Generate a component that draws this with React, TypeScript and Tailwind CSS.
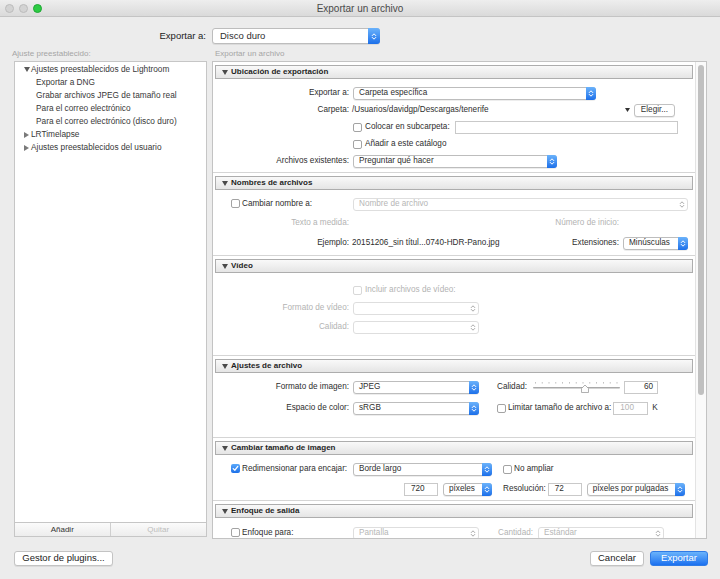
import React from "react";

const Chevrons = ({ color }: { color: string }) => (
  <svg width="6" height="9" viewBox="0 0 6 9" fill="none">
    <path d="M1.2 3.6 L3 1.8 L4.8 3.6" stroke={color} strokeWidth="1" strokeLinecap="round" strokeLinejoin="round" />
    <path d="M1.2 5.4 L3 7.2 L4.8 5.4" stroke={color} strokeWidth="1" strokeLinecap="round" strokeLinejoin="round" />
  </svg>
);

function Popup({ w, text = "", disabled = false, big = false }: { w: string; text?: string; disabled?: boolean; big?: boolean }) {
  return (
    <div
      className={`${w} ${big ? "h-[16px]" : "h-[13px]"} shrink-0 flex items-stretch bg-white rounded-[3px] border ${
        disabled ? "border-[#dedede]" : "border-[#bdbdbd] shadow-[0_1px_0_rgba(0,0,0,0.07)]"
      }`}
    >
      <span
        className={`flex-1 min-w-0 flex items-center whitespace-nowrap overflow-hidden ${
          big ? "pl-[7px] text-[9.5px]" : "pl-[5px] text-[8.2px]"
        } ${disabled ? "text-[#b6b6b6]" : "text-[#2e2e2e]"}`}
      >
        {text}
      </span>
      {disabled ? (
        <span className="w-[10px] flex items-center justify-center">
          <Chevrons color="#a9a9a9" />
        </span>
      ) : (
        <span
          className={`${big ? "w-[12px]" : "w-[10px]"} -my-px -mr-px rounded-r-[3px] bg-linear-to-b from-[#6ab2fb] to-[#1b6fe9] flex items-center justify-center`}
        >
          <Chevrons color="#ffffff" />
        </span>
      )}
    </div>
  );
}

function Check({ checked = false, disabled = false }: { checked?: boolean; disabled?: boolean }) {
  if (checked) {
    return (
      <span className="w-[9px] h-[9px] shrink-0 rounded-[2px] bg-linear-to-b from-[#5aa8fa] to-[#1c6fe8] flex items-center justify-center">
        <svg width="7" height="7" viewBox="0 0 7 7">
          <path d="M1.2 3.6 L2.9 5.2 L5.8 1.4" stroke="#fff" strokeWidth="1.3" fill="none" strokeLinecap="round" strokeLinejoin="round" />
        </svg>
      </span>
    );
  }
  return (
    <span
      className={`w-[9px] h-[9px] shrink-0 rounded-[2px] bg-white border ${disabled ? "border-[#d8d8d8]" : "border-[#a3a3a3]"}`}
    />
  );
}

function Field({ w, value = "", muted = false, right = false }: { w: string; value?: string; muted?: boolean; right?: boolean }) {
  return (
    <div
      className={`${w} h-[13px] shrink-0 bg-white border border-[#c9c9c9] flex items-center text-[8.2px] ${
        right ? "justify-end pr-[4px]" : "pl-[6px]"
      } ${muted ? "text-[#b3b3b3]" : "text-[#2e2e2e]"}`}
    >
      {value}
    </div>
  );
}

function Header({ title }: { title: string }) {
  return (
    <div className="mx-[2px] h-[14px] shrink-0 border border-[#adadad] bg-linear-to-b from-[#f9f9f9] to-[#e5e5e5] flex items-center pl-[6px] gap-[3px]">
      <svg width="6" height="5" viewBox="0 0 6 5">
        <path d="M0 0 H6 L3 5 Z" fill="#4a4a4a" />
      </svg>
      <span className="text-[8px] font-bold text-[#1f1f1f]">{title}</span>
    </div>
  );
}

const Sep = () => <div className="mt-auto mb-[3px] h-px bg-[#d5d5d5]" />;

const Label = ({ children, muted = false }: { children: React.ReactNode; muted?: boolean }) => (
  <span className={`w-[136px] shrink-0 text-right ${muted ? "text-[#b3b3b3]" : ""}`}>{children}</span>
);

const TREE = [
  { t: "Ajustes preestablecidos de Lightroom", kind: "open" },
  { t: "Exportar a DNG", kind: "child" },
  { t: "Grabar archivos JPEG de tamaño real", kind: "child" },
  { t: "Para el correo electrónico", kind: "child" },
  { t: "Para el correo electrónico (disco duro)", kind: "child" },
  { t: "LRTimelapse", kind: "closed" },
  { t: "Ajustes preestablecidos del usuario", kind: "closed" },
];

export default function App() {
  return (
    <div className="w-[720px] h-[579px] bg-[#ececec] flex flex-col overflow-hidden font-['Liberation_Sans',Arial,sans-serif] text-[#2e2e2e]">
      {/* title bar */}
      <div className="h-[17px] shrink-0 grid grid-cols-[1fr_auto_1fr] items-center border-b border-[#c4c4c4] bg-linear-to-b from-[#eeeeee] to-[#dadada]">
        <div className="flex items-center gap-[5px] pl-[5px]">
          <span className="w-[9px] h-[9px] rounded-full bg-[#d3d3d3] border border-[#bcbcbc]" />
          <span className="w-[9px] h-[9px] rounded-full bg-[#d3d3d3] border border-[#bcbcbc]" />
          <span className="w-[9px] h-[9px] rounded-full bg-[#2ccb43] border border-[#1fa734]" />
        </div>
        <span className="text-[10px] text-[#4a4a4a]">Exportar un archivo</span>
        <div />
      </div>

      {/* destination */}
      <div className="mt-[11px] h-[16px] flex items-center shrink-0">
        <span className="w-[206px] text-right text-[9.5px] text-[#222]">Exportar a:</span>
        <div className="ml-[6px]">
          <Popup w="w-[168px]" text="Disco duro" big />
        </div>
      </div>

      <div className="mt-[4px] h-[12px] flex items-center text-[8px] text-[#a5a5a5] shrink-0">
        <span className="w-[215px] pl-[12px]">Ajuste preestablecido:</span>
        <span>Exportar un archivo</span>
      </div>

      {/* main */}
      <div className="mt-[1px] flex items-start pl-[14px] shrink-0">
        {/* presets */}
        <div className="w-[193px] h-[476px] bg-white border border-[#c6c6c6] flex flex-col text-[8.3px] text-[#383838]">
          <div className="flex-1 pt-[1px]">
            {TREE.map((r) => (
              <div key={r.t} className={`h-[13px] flex items-center ${r.kind === "child" ? "pl-[21px]" : "pl-[9px]"}`}>
                {r.kind === "open" && (
                  <svg width="6" height="5" viewBox="0 0 6 5" className="mr-px">
                    <path d="M0 0 H6 L3 5 Z" fill="#5a5a5a" />
                  </svg>
                )}
                {r.kind === "closed" && (
                  <svg width="5" height="6" viewBox="0 0 5 6" className="mr-[2px]">
                    <path d="M0 0 V6 L5 3 Z" fill="#7a7a7a" />
                  </svg>
                )}
                <span>{r.t}</span>
              </div>
            ))}
          </div>
          <div className="h-[14px] grid grid-cols-2 border-t border-[#c6c6c6] bg-linear-to-b from-[#fbfbfb] to-[#ededed] text-[8px]">
            <span className="flex items-center justify-center border-r border-[#cfcfcf] text-[#333]">Añadir</span>
            <span className="flex items-center justify-center text-[#bdbdbd]">Quitar</span>
          </div>
        </div>

        {/* export settings */}
        <div className="ml-[5px] w-[495px] h-[478px] border border-[#c3c3c3] bg-white flex text-[8.2px]">
          <div className="w-[482px] h-full pt-[3px] flex flex-col overflow-hidden">
            <Header title="Ubicación de exportación" />
            <div className="h-[97px] shrink-0 flex flex-col pt-[6px] gap-[1px]">
              <div className="h-[16px] flex items-center">
                <Label>Exportar a:</Label>
                <div className="ml-[4px]">
                  <Popup w="w-[243px]" text="Carpeta específica" />
                </div>
              </div>
              <div className="h-[16px] flex items-center">
                <Label>Carpeta:</Label>
                <span className="ml-[3px] flex-1">/Usuarios/davidgp/Descargas/tenerife</span>
                <svg width="5" height="4" viewBox="0 0 5 4">
                  <path d="M0 0 H5 L2.5 4 Z" fill="#333" />
                </svg>
                <span className="ml-[4px] mr-[20px] w-[41px] h-[13px] rounded-[3px] border border-[#c1c1c1] bg-white shadow-[0_1px_0_rgba(0,0,0,0.07)] flex items-center justify-center text-[#333]">
                  Elegir...
                </span>
              </div>
              <div className="h-[16px] flex items-center">
                <span className="w-[140px] shrink-0" />
                <Check />
                <span className="ml-[3px]">Colocar en subcarpeta:</span>
                <div className="ml-auto mr-[17px]">
                  <Field w="w-[223px]" />
                </div>
              </div>
              <div className="h-[16px] flex items-center">
                <span className="w-[140px] shrink-0" />
                <Check />
                <span className="ml-[3px]">Añadir a este catálogo</span>
              </div>
              <div className="h-[16px] flex items-center">
                <Label>Archivos existentes:</Label>
                <div className="ml-[4px]">
                  <Popup w="w-[204px]" text="Preguntar qué hacer" />
                </div>
              </div>
              <Sep />
            </div>

            <Header title="Nombres de archivos" />
            <div className="h-[69px] shrink-0 flex flex-col pt-[6px]">
              <div className="h-[16px] flex items-center">
                <div className="w-[140px] shrink-0 pl-[18px] flex items-center">
                  <Check />
                  <span className="ml-[2px]">Cambiar nombre a:</span>
                </div>
                <Popup w="w-[335px]" text="Nombre de archivo" disabled />
              </div>
              <div className="mt-[3px] h-[16px] flex items-center text-[#b3b3b3]">
                <Label>Texto a medida:</Label>
                <span className="ml-[3px] w-[267px] text-right">Número de inicio:</span>
              </div>
              <div className="mt-[4px] h-[16px] flex items-center">
                <Label>Ejemplo:</Label>
                <div className="ml-[3px] w-[267px] flex justify-between">
                  <span>20151206_sin títul...0740-HDR-Pano.jpg</span>
                  <span>Extensiones:</span>
                </div>
                <div className="ml-[4px]">
                  <Popup w="w-[65px]" text="Minúsculas" />
                </div>
              </div>
              <Sep />
            </div>

            <Header title="Vídeo" />
            <div className="h-[86px] shrink-0 flex flex-col pt-[9px]">
              <div className="h-[16px] flex items-center">
                <span className="w-[140px] shrink-0" />
                <Check disabled />
                <span className="ml-[3px] text-[#b3b3b3]">Incluir archivos de vídeo:</span>
              </div>
              <div className="mt-[2px] h-[16px] flex items-center">
                <Label muted>Formato de vídeo:</Label>
                <div className="ml-[4px]">
                  <Popup w="w-[126px]" disabled />
                </div>
              </div>
              <div className="mt-[3px] h-[16px] flex items-center">
                <Label muted>Calidad:</Label>
                <div className="ml-[4px]">
                  <Popup w="w-[126px]" disabled />
                </div>
              </div>
              <Sep />
            </div>

            <Header title="Ajustes de archivo" />
            <div className="h-[68px] shrink-0 flex flex-col pt-[6px]">
              <div className="h-[16px] flex items-center">
                <Label>Formato de imagen:</Label>
                <div className="ml-[4px]">
                  <Popup w="w-[126px]" text="JPEG" />
                </div>
                <span className="ml-[18px] w-[36px] shrink-0">Calidad:</span>
                <svg width="87" height="14" viewBox="0 0 87 14" className="shrink-0">
                  {Array.from({ length: 13 }).map((_, i) => (
                    <rect key={i} x={2 + i * 6.8} y={2} width={0.8} height={1.6} fill="#b5b5b5" />
                  ))}
                  <rect x="0" y="7" width="87" height="1.6" rx="0.8" fill="#a9a9a9" />
                  <path d="M48.5 12.5 V8.5 L52 5 L55.5 8.5 V12.5 Z" fill="#fdfdfd" stroke="#9d9d9d" strokeWidth="0.8" strokeLinejoin="round" />
                </svg>
                <div className="ml-[4px]">
                  <Field w="w-[34px]" value="60" right />
                </div>
              </div>
              <div className="mt-[5px] h-[16px] flex items-center">
                <Label>Espacio de color:</Label>
                <div className="ml-[4px]">
                  <Popup w="w-[126px]" text="sRGB" />
                </div>
                <span className="ml-[18px]" />
                <Check />
                <span className="ml-[2px]">Limitar tamaño de archivo a:</span>
                <div className="ml-[2px]">
                  <Field w="w-[35px]" value="100" muted />
                </div>
                <span className="ml-[4px]">K</span>
              </div>
              <Sep />
            </div>

            <Header title="Cambiar tamaño de imagen" />
            <div className="h-[49px] shrink-0 flex flex-col pt-[6px]">
              <div className="h-[16px] flex items-center">
                <div className="w-[140px] shrink-0 pl-[18px] flex items-center">
                  <Check checked />
                  <span className="ml-[2px]">Redimensionar para encajar:</span>
                </div>
                <Popup w="w-[139px]" text="Borde largo" />
                <span className="ml-[11px]" />
                <Check />
                <span className="ml-[2px]">No ampliar</span>
              </div>
              <div className="mt-[4px] h-[16px] flex items-center">
                <span className="w-[191px] shrink-0" />
                <Field w="w-[34px]" value="720" />
                <div className="ml-[5px]">
                  <Popup w="w-[49px]" text="píxeles" />
                </div>
                <span className="ml-[11px]">Resolución:</span>
                <div className="ml-[2px]">
                  <Field w="w-[34px]" value="72" />
                </div>
                <div className="ml-[5px]">
                  <Popup w="w-[98px]" text="píxeles por pulgadas" />
                </div>
              </div>
              <Sep />
            </div>

            <Header title="Enfoque de salida" />
            <div className="flex-1 flex flex-col pt-[7px]">
              <div className="h-[16px] flex items-center">
                <div className="w-[140px] shrink-0 pl-[18px] flex items-center">
                  <Check />
                  <span className="ml-[2px]">Enfoque para:</span>
                </div>
                <Popup w="w-[126px]" text="Pantalla" disabled />
                <span className="ml-[19px] text-[#b3b3b3]">Cantidad:</span>
                <div className="ml-[5px]">
                  <Popup w="w-[126px]" text="Estándar" disabled />
                </div>
              </div>
            </div>
          </div>

          {/* scrollbar */}
          <div className="w-[11px] h-full border-l border-[#e3e3e3] bg-[#fafafa] pt-[3px] flex justify-center">
            <div className="w-[6px] h-[330px] rounded-full bg-[#c0c0c0]" />
          </div>
        </div>
      </div>

      {/* footer */}
      <div className="mt-[12px] h-[15px] flex items-center px-[14px] text-[9.5px] shrink-0">
        <span className="w-[99px] h-[15px] rounded-[3px] border border-[#c3c3c3] bg-white shadow-[0_1px_0_rgba(0,0,0,0.07)] flex items-center justify-center text-[#222]">
          Gestor de plugins...
        </span>
        <span className="ml-auto w-[54px] h-[15px] rounded-[3px] border border-[#c3c3c3] bg-white shadow-[0_1px_0_rgba(0,0,0,0.07)] flex items-center justify-center text-[#222]">
          Cancelar
        </span>
        <span className="ml-[6px] mr-[-2px] w-[58px] h-[15px] rounded-[3px] border border-[#2f7be6] bg-linear-to-b from-[#6ab3fb] to-[#1a70ef] flex items-center justify-center text-white">
          Exportar
        </span>
      </div>
    </div>
  );
}
